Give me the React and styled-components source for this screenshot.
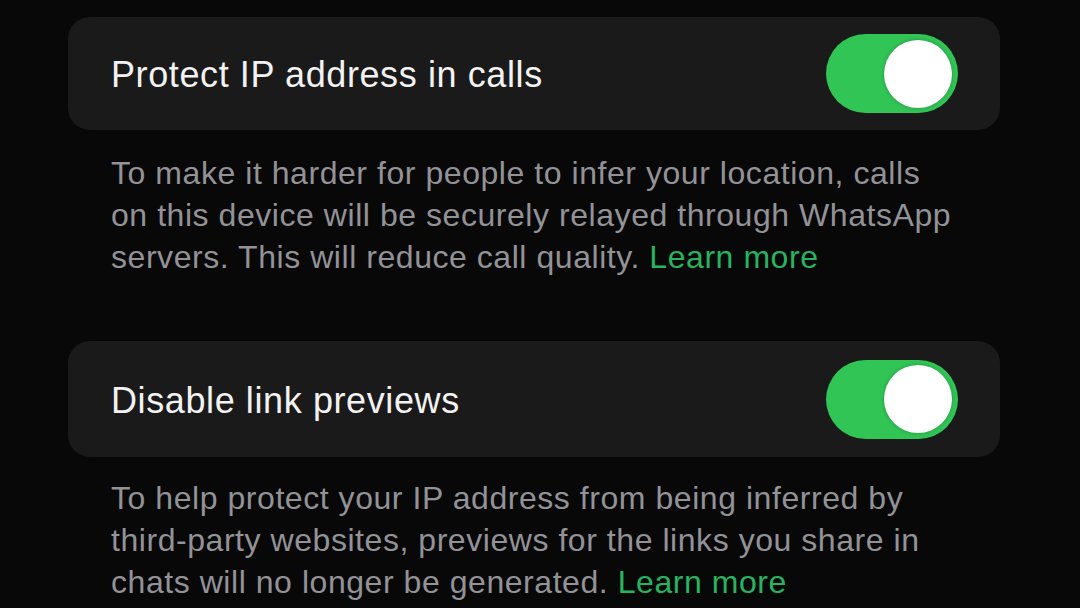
import React from "react"
import styled, { createGlobalStyle } from "styled-components"

const Global = createGlobalStyle`
  html, body {
    margin: 0;
    padding: 0;
    background: #080808;
  }
  body {
    font-family: "Liberation Sans", Arial, sans-serif;
    -webkit-font-smoothing: antialiased;
  }
`

const Page = styled.div`
  width: 1080px;
  height: 608px;
  overflow: hidden;
  background: #080808;
  padding: 17px 80px 0 68px;
  box-sizing: border-box;
  display: flex;
  flex-direction: column;
`

const Section = styled.section`
  display: flex;
  flex-direction: column;
  margin-bottom: ${p => p.gap || 0}px;
`

const Card = styled.div`
  height: ${p => p.h || 113}px;
  background: #1a1a1a;
  border-radius: 22px;
  display: flex;
  align-items: center;
  justify-content: space-between;
  padding: 0 42px 0 43px;
  box-sizing: border-box;
`

const Title = styled.span`
  color: #f2f2f2;
  font-size: 36px;
  letter-spacing: 0.6px;
  padding-top: 3px;
`

const Toggle = styled.div`
  width: 132px;
  height: 79px;
  border-radius: 40px;
  background: #31c556;
  display: flex;
  align-items: center;
  justify-content: flex-end;
  padding: 0 6px;
  box-sizing: border-box;
`

const Knob = styled.div`
  width: 68px;
  height: 68px;
  border-radius: 50%;
  background: #ffffff;
  box-shadow: 0 0 4px rgba(0, 0, 0, 0.25);
`

const Desc = styled.p`
  margin: 0;
  padding: ${p => p.top || 27}px 0 0 43px;
  color: #929297;
  font-size: 32px;
  letter-spacing: 0.55px;
  line-height: 42px;
  white-space: nowrap;
`

const Learn = styled.span`
  color: #27b35f;
`

const Setting = ({ title, lines, cardHeight, descTop, gap }) => (
  <Section gap={gap}>
    <Card h={cardHeight}>
      <Title>{title}</Title>
      <Toggle>
        <Knob />
      </Toggle>
    </Card>
    <Desc top={descTop}>
      {lines.map((l, i) => (
        <React.Fragment key={i}>
          {l}
          {i < lines.length - 1 ? <br /> : <> <Learn>Learn more</Learn></>}
        </React.Fragment>
      ))}
    </Desc>
  </Section>
)

export default function App() {
  return (
    <>
      <Global />
      <Page>
        <Setting
          title="Protect IP address in calls"
          cardHeight={113}
          descTop={22}
          gap={63}
          lines={[
            "To make it harder for people to infer your location, calls",
            "on this device will be securely relayed through WhatsApp",
            "servers. This will reduce call quality.",
          ]}
        />
        <Setting
          title="Disable link previews"
          cardHeight={116}
          descTop={20}
          lines={[
            "To help protect your IP address from being inferred by",
            "third-party websites, previews for the links you share in",
            "chats will no longer be generated.",
          ]}
        />
      </Page>
    </>
  )
}
